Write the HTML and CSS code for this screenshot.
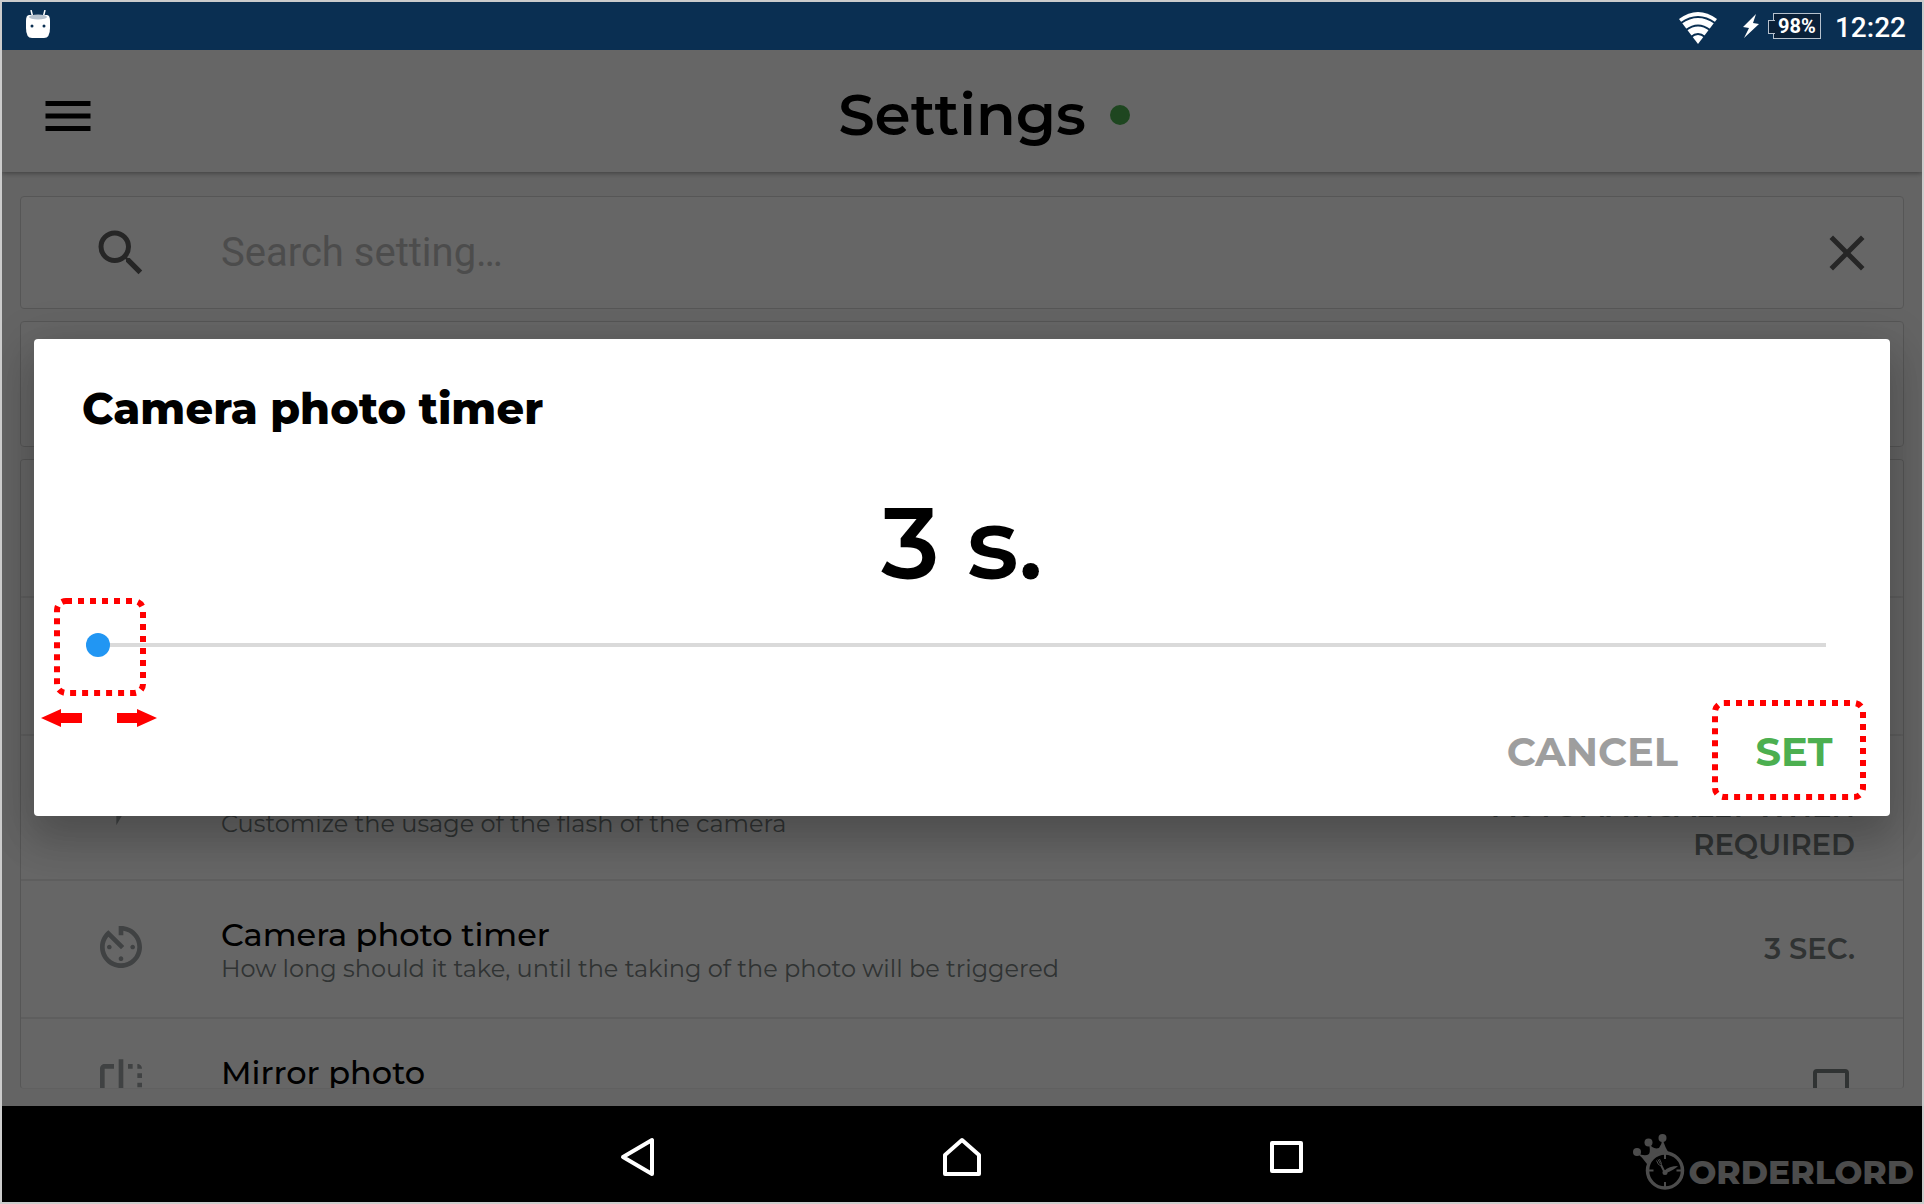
FILE: index.html
```html
<!DOCTYPE html>
<html lang="en">
<head>
<meta charset="utf-8">
<meta name="viewport" content="width=device-width, initial-scale=1">
<title>Settings</title>
<link rel="stylesheet" href="styles.css">
</head>
<body>
<div class="device">
  <div class="statusbar">
    <svg class="robot" viewBox="0 0 24 28" aria-hidden="true"><path d="M5 0l1.500 6M19 0l-1.500 6" stroke="#fff" stroke-width="1.500"/><path d="M0 11Q0 5 3 5H21Q24 5 24 11V18Q24 28 18 28H6Q0 28 0 18Z" fill="#fff"/><ellipse cx="12" cy="7" rx="9" ry="2.500" fill="#b6c1cd"/><circle cx="6" cy="16" r="1.500" fill="#0a2f52"/><circle cx="18" cy="16" r="1.500" fill="#0a2f52"/></svg>
    <div class="status-right">
      <svg class="wifi" viewBox="0 0 38 32" aria-hidden="true"><path d="M19 32L0 7Q19-7 38 7Z" fill="#fff"/><path d="M2 11Q19-1 36 11M7 18Q19 9 31 18M12 25Q19 19 26 25" fill="none" stroke="#0a2f52" stroke-width="2"/></svg>
      <svg class="bolt" viewBox="0 0 16 24" aria-hidden="true"><path d="M13 0L0 13l6 1L1 24 16 10l-6-1Z" fill="#fff"/></svg>
      <span class="battery">98%</span>
      <span class="clock">12:22</span>
    </div>
  </div>

  <main class="app">
    <header class="appbar">
      <button class="icon-btn" type="button" aria-label="Menu"><svg viewBox="0 0 24 24"><path d="M3 18h18v-2H3v2zm0-5h18v-2H3v2zm0-7v2h18V6H3z"/></svg></button>
      <h1 class="page-title">Settings<span class="online"></span></h1>
    </header>
    <div class="content">
      <div class="card search">
        <svg class="search-icon" viewBox="0 0 24 24" aria-hidden="true"><path d="M15.500 14h-.790l-.280-.270A6.470 6.470 0 0 0 16 9.500 6.500 6.500 0 1 0 9.500 16c1.610 0 3.090-.590 4.230-1.570l.270.280v.790l5 4.990L20.490 19l-4.990-5zm-6 0C7.010 14 5 11.990 5 9.500S7.010 5 9.500 5 14 7.010 14 9.500 11.990 14 9.500 14z"/></svg>
        <input class="search-input" type="text" placeholder="Search setting…" aria-label="Search setting">
        <button class="icon-btn dim" type="button" aria-label="Clear"><svg viewBox="0 0 24 24"><path d="M19 6.410L17.590 5 12 10.590 6.410 5 5 6.410 10.590 12 5 17.590 6.410 19 12 13.410 17.590 19 19 17.590 13.410 12z"/></svg></button>
      </div>
      <div class="card group"></div>
      <div class="card list">
        <div class="row"></div>
        <div class="row"></div>
        <div class="row tall">
          <svg class="row-icon" viewBox="0 0 24 24" aria-hidden="true"><path d="M7 2v11h3v9l7-12h-4l4-8z"/></svg>
          <div class="row-text"><p class="row-desc no-title">Customize the usage of the flash of the camera</p></div>
          <div class="row-value">AUTOMATICALLY WHEN REQUIRED</div>
        </div>
        <div class="row">
          <svg class="row-icon" viewBox="0 0 24 24" aria-hidden="true"><path d="M11 17c0 .550.450 1 1 1s1-.450 1-1-.450-1-1-1-1 .450-1 1zm0-14v4h2V5.080c3.390.490 6 3.390 6 6.920 0 3.870-3.130 7-7 7s-7-3.130-7-7c0-1.680.590-3.220 1.580-4.420L12 13l1.410-1.410-6.800-6.800v.020C4.420 6.450 3 9.050 3 12c0 4.970 4.020 9 9 9 4.970 0 9-4.030 9-9s-4.030-9-9-9h-1zm7 9c0-.550-.450-1-1-1s-1 .450-1 1 .450 1 1 1 1-.450 1-1zM6 12c0 .550.450 1 1 1s1-.450 1-1-.450-1-1-1-1 .450-1 1z"/></svg>
          <div class="row-text">
            <h2 class="row-title">Camera photo timer</h2>
            <p class="row-desc">How long should it take, until the taking of the photo will be triggered</p>
          </div>
          <div class="row-value">3 SEC.</div>
        </div>
        <div class="row">
          <svg class="row-icon" viewBox="0 0 24 24" aria-hidden="true"><path d="M15 21h2v-2h-2v2zm4-12h2V7h-2v2zM3 5v14c0 1.100.900 2 2 2h4v-2H5V5h4V3H5c-1.100 0-2 .900-2 2zm16-2v2h2c0-1.100-.900-2-2-2zm-8 20h2V1h-2v22zm8-6h2v-2h-2v2zM15 5h2V3h-2v2zm4 8h2v-2h-2v2zm0 8c1.100 0 2-.900 2-2h-2v2z"/></svg>
          <div class="row-text"><h2 class="row-title"><label for="mirror">Mirror photo</label></h2></div>
          <input class="row-check" id="mirror" type="checkbox">
        </div>
      </div>
    </div>

    <div class="scrim">
      <section class="dialog" role="dialog" aria-labelledby="dialog-title">
        <h2 class="dialog-title" id="dialog-title">Camera photo timer</h2>
        <output class="dialog-value" for="timer">3 s.</output>
        <div class="slider">
          <input id="timer" type="range" min="3" max="60" value="3" aria-labelledby="dialog-title">
          <svg class="mark mark-thumb" viewBox="0 0 92 98" aria-hidden="true"><rect x="3" y="3" width="86" height="92" rx="9"/></svg>
          <svg class="arrows" viewBox="0 0 116 18" aria-hidden="true"><path d="M0 9L20 0V4H41V14H20V18ZM116 9L96 0V4H76V14H96V18Z"/></svg>
        </div>
        <div class="actions">
          <button class="action cancel" type="button">CANCEL</button>
          <button class="action set" type="button">SET<svg class="mark mark-set" viewBox="0 0 154 100" aria-hidden="true"><rect x="3" y="3" width="148" height="94" rx="9"/></svg></button>
        </div>
      </section>
    </div>
  </main>

  <nav class="navbar" aria-label="System">
    <div class="nav-buttons">
      <button class="nav-btn" type="button" aria-label="Back"><svg viewBox="0 0 40 40"><path d="M34 3V37L5 20Z"/></svg></button>
      <button class="nav-btn" type="button" aria-label="Home"><svg viewBox="0 0 40 40"><path d="M20 3L37 18V37H3V18Z"/></svg></button>
      <button class="nav-btn" type="button" aria-label="Recent apps"><svg viewBox="0 0 40 40"><path d="M6 6H35V34H6Z"/></svg></button>
    </div>
    <div class="brand">
      <svg class="brand-icon" viewBox="0 0 52 56" aria-hidden="true">
        <g fill="#4c4c4c"><circle cx="4" cy="18" r="4"/><circle cx="15.500" cy="8.500" r="4"/><circle cx="29.500" cy="4" r="4"/><path d="M4 19Q12 23 16 20Q18 16 15.500 9Q20 16 26 14Q29 10 29.500 4Q32 14 36 19L32 26L18 36L14 30Q10 24 4 19Z"/></g>
        <circle cx="32" cy="36.500" r="17.500" fill="#000" stroke="#4c4c4c" stroke-width="3.500"/>
        <path d="M32 20v5M32 48v5M15.500 36.500h5M43.500 36.500h5" stroke="#4c4c4c" stroke-width="2"/>
        <path d="M28 31L32 39" fill="none" stroke="#4c4c4c" stroke-width="2"/>
        <path d="M23.500 26.500l2 4M25 25.500l2.500 4.500M26.500 25l2 4.500M25.500 30.500q3 2 3-1" fill="none" stroke="#4c4c4c"/>
        <path d="M31 37Q36 32 45 32Q41 36 33 39Z" fill="#4c4c4c"/><circle cx="32" cy="38.500" r="2.500" fill="#4c4c4c"/>
      </svg>
      <span>ORDERLORD</span>
    </div>
  </nav>
</div>
</body>
</html>
```
FILE: styles.css
```css
* { box-sizing: border-box; }
body { margin: 0; font-family: Montserrat, Inter, "Open Sans", sans-serif; color: #000; }
h1, h2, p { margin: 0; }
button { border: 0; padding: 0; background: none; font: inherit; color: inherit; }

.device { display: grid; grid-template-rows: 48px minmax(0, 1fr) 96px; height: 100vh; border: 2px solid #ccc; background: #000; }

.statusbar { display: flex; align-items: center; justify-content: space-between; padding: 0 16px 0 24px; background: #0a2f52; color: #fff; font-family: Roboto, sans-serif; }
.robot { width: 24px; height: 28px; margin-bottom: 4px; }
.status-right { display: flex; align-items: center; }
.wifi { width: 38px; height: 32px; margin: 3px 26px 0 0; }
.bolt { width: 16px; height: 24px; }
.battery { position: relative; width: 48px; height: 26px; margin: 0 14px 0 14px; border: 1px solid #b6c1cd; background: #0a2038; font-size: 20px; font-weight: 700; line-height: 24px; text-align: center; }
.battery::before { content: ""; position: absolute; left: -6px; top: 6px; width: 6px; height: 12px; border: 1px solid #b6c1cd; border-right: 0; background: #0a2038; }
.clock { font-size: 28px; font-weight: 500; line-height: 48px; padding-top: 4px; }

.app { position: relative; display: flex; flex-direction: column; overflow: hidden; background: #fafafa; }
.appbar { position: relative; display: flex; align-items: center; flex: none; height: 122px; padding-left: 36px; padding-top: 10px; background: #fff; box-shadow: 0 1px 5px rgba(0, 0, 0, .4); }
.icon-btn { flex: none; width: 60px; height: 60px; }
.icon-btn svg { display: block; }
.icon-btn.dim { fill: #5f5f5f; }
.page-title { display: flex; align-items: center; justify-content: center; gap: 24px; flex: 1; padding: 0 52px 2px 0; font-size: 58px; font-weight: 600; line-height: 72px; }
.online { width: 20px; height: 20px; border-radius: 50%; background: #4caf50; }

.content { display: flex; flex-direction: column; gap: 12px; flex: 1; min-height: 0; padding: 24px 18px 17px; }
.card { flex: none; border: 1px solid #d8d8d8; border-radius: 4px; background: #fff; }
.search { display: flex; align-items: center; height: 113px; padding: 0 26px 0 70px; }
.search-icon { flex: none; width: 60px; height: 60px; fill: #5f5f5f; }
.search-input { flex: 1; min-width: 0; margin-left: 70px; border: 0; padding: 0; background: none; font: 40px/60px Roboto, sans-serif; }
.search-input::placeholder { color: #bebebe; opacity: 1; }
.group { height: 126px; }
.list { flex: 1 1 0; min-height: 0; overflow: hidden; border-bottom-color: #f0f0f0; }

.row { display: flex; align-items: flex-start; height: 138px; padding: 0 48px 0 72px; border-bottom: 2px solid #eaeaea; }
.row.tall { height: 145px; }
.row-icon { flex: none; width: 56px; height: 56px; margin-top: 38px; fill: #a0a5a7; }
.row-text { flex: 1; padding: 35px 0 0 72px; }
.row-title { font-size: 32px; font-weight: 500; line-height: 38px; }
.row-desc { font-size: 24px; line-height: 30px; color: #787f7f; }
.row-desc.no-title { padding-top: 38px; }
.row-value { width: 400px; padding-top: 49px; text-align: right; font-size: 29px; font-weight: 600; line-height: 38px; color: #787f7f; }
.tall .row-value { padding-top: 52px; }
.row-check { appearance: none; width: 36px; height: 36px; margin: 50px 6px 0 0; border: 4px solid #787f7f; border-radius: 4px; }

.scrim { position: absolute; inset: 0; display: flex; align-items: center; padding: 0 32px; background: rgba(0, 0, 0, .6); }
.dialog { flex: 1; display: flex; flex-direction: column; margin-bottom: 1px; padding: 40px 24px 32px 48px; border-radius: 4px; background: #fff; box-shadow: 0 24px 38px 3px rgba(0, 0, 0, .14), 0 9px 46px 8px rgba(0, 0, 0, .12); }
.dialog-title { font-size: 43px; font-weight: 800; line-height: 60px; }
.dialog-value { margin: 44px 24px 0 0; font-size: 100px; font-weight: 600; line-height: 120px; text-align: center; }
.slider { position: relative; height: 48px; margin: 18px 40px 0 4px; }
.slider input { appearance: none; display: block; width: 100%; height: 48px; margin: 0; background: linear-gradient(#dadada, #dadada) center / 100% 4px no-repeat; }
.slider input::-webkit-slider-thumb { appearance: none; width: 24px; height: 24px; border-radius: 50%; background: #2196f3; }
.mark { position: absolute; pointer-events: none; fill: none; stroke: #f00; stroke-width: 6px; stroke-dasharray: 6 6; }
.mark-thumb { left: -32px; top: -23px; width: 92px; height: 98px; }
.arrows { position: absolute; left: -45px; top: 88px; width: 116px; height: 18px; fill: #f00; }
.actions { display: flex; justify-content: flex-end; gap: 34px; margin-top: 51px; }
.action { height: 64px; font-size: 40px; font-weight: 700; line-height: 64px; }
.cancel { color: #9e9e9e; }
.set { position: relative; width: 154px; padding-left: 10px; color: #4caf50; }
.mark-set { left: 0; top: -20px; width: 154px; height: 100px; }

.navbar { display: grid; grid-template-columns: 1fr auto 1fr; align-items: center; }
.nav-buttons { grid-column: 2; display: flex; gap: 284px; padding-top: 6px; }
.nav-btn { width: 40px; height: 40px; }
.nav-btn svg { display: block; fill: none; stroke: #fff; stroke-width: 4; stroke-linejoin: round; }
.brand { align-self: end; display: flex; align-items: flex-end; justify-content: flex-end; gap: 3px; padding: 0 8px 10px 0; color: #4c4c4c; font-size: 33px; font-weight: 800; line-height: 40px; }
.brand-icon { width: 52px; height: 56px; margin-bottom: 2px; }
```
